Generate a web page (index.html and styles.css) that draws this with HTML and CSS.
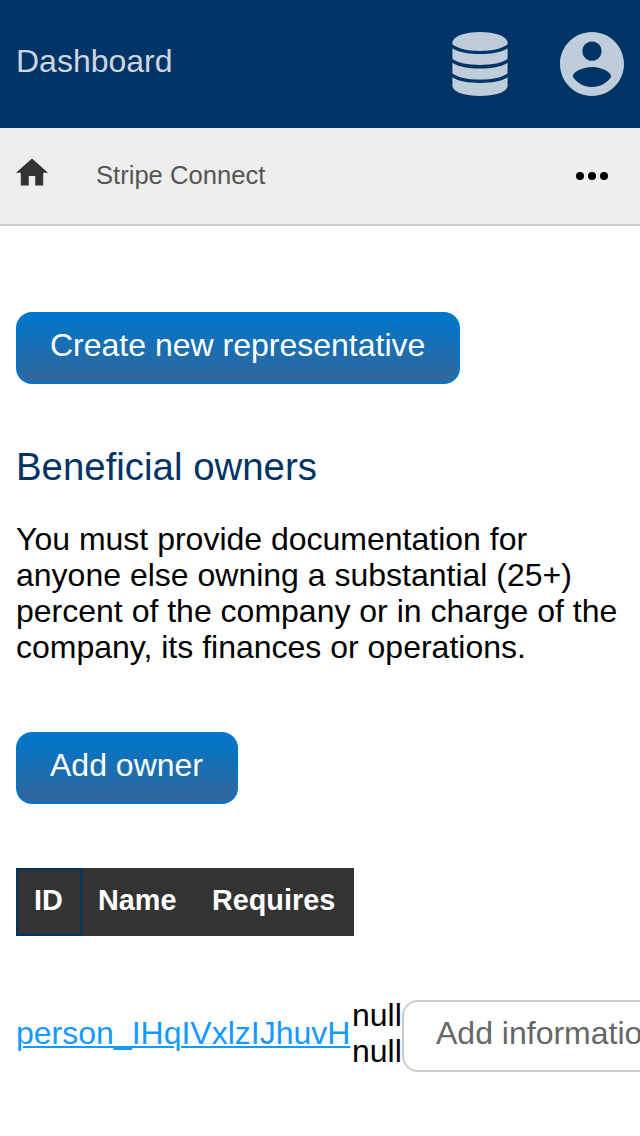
FILE: index.html
```html
<!DOCTYPE html>
<html lang="en">
<head>
<meta charset="utf-8">
<title>Dashboard</title>
<link rel="stylesheet" href="styles.css">
</head>
<body>
<header class="header">
  <a class="header-title">Dashboard</a>
  <svg class="icon-data" viewBox="0 0 56 64"><path d="M.4 10C1.500 4.200 13 0 28 0s26.500 4.200 27.600 10v2.300C50.500 16.600 40.500 19 28 19S5.500 16.600.4 12.300zM.4 16.200C5.500 20 16 22.100 28 22.100s22.500-2.100 27.600-5.900v10.600C50.500 31 40.500 33 28 33S5.500 31 .4 26.800zM.4 30.700C5.500 34.500 16 36.500 28 36.500s22.500-2 27.600-5.800v10.600C50.500 45.600 40.500 47.600 28 47.600S5.500 45.600.4 41.300zM.4 45.200C5.500 49 16 50.900 28 50.900s22.500-1.900 27.600-5.700v9.300C54 60.500 42.500 64 28 64S2 60.500.4 54.500z"/></svg>
  <svg class="icon-account" viewBox="2 2 20 20"><path d="M12 2C6.480 2 2 6.480 2 12s4.480 10 10 10 10-4.480 10-10S17.520 2 12 2zm0 3c1.660 0 3 1.340 3 3s-1.340 3-3 3-3-1.340-3-3 1.340-3 3-3zm0 14.200c-2.500 0-4.710-1.280-6-3.220.03-1.990 4-3.080 6-3.080 1.990 0 5.970 1.090 6 3.080-1.290 1.940-3.500 3.220-6 3.220z"/></svg>
</header>
<nav class="navbar">
  <svg class="icon-home" viewBox="2 2.750 20 20"><path d="M10 20v-6h4v6h5v-8h3L12 3 2 12h3v8z"/></svg>
  <a class="navbar-link">Stripe Connect</a>
  <svg class="icon-more" viewBox="0 0 32 8"><circle cx="4" cy="4" r="4"/><circle cx="16" cy="4" r="4"/><circle cx="28" cy="4" r="4"/></svg>
</nav>
<main class="content">
  <a class="button button-primary">Create new representative</a>
  <h2 class="heading">Beneficial owners</h2>
  <p class="description">You must provide documentation for anyone else owning a substantial (25+) percent of the company or in charge of the company, its finances or operations.</p>
  <a class="button button-primary">Add owner</a>
  <div class="columns">
    <span class="column column-active">ID</span>
    <span class="column">Name</span>
    <span class="column">Requires</span>
  </div>
  <div class="owner">
    <a class="owner-link">person_IHqIVxlzIJhuvH</a>
    <div class="owner-name">null<br>null</div>
    <a class="button button-plain">Add information</a>
  </div>
</main>
</body>
</html>
```

FILE: styles.css
```css
* {
  box-sizing: border-box;
}

body {
  margin: 0;
  overflow: hidden;
  background: #fff;
  color: #000;
  font: 32px/36px "Liberation Sans", Arial, sans-serif;
}

.header {
  display: flex;
  align-items: flex-start;
  height: 128px;
  padding: 32px 16px;
  background: #036;
}

.header-title {
  flex: 1;
  padding-top: 11px;
  color: #ccd6e0;
}

.icon-data {
  width: 56px;
  height: 64px;
  margin-right: 52px;
  fill: #bfccd9;
}

.icon-account {
  width: 64px;
  height: 64px;
  fill: #bfccd9;
}

.navbar {
  display: flex;
  align-items: center;
  height: 98px;
  padding: 0 32px 0 16px;
  border-bottom: 2px solid #ccc;
  background: #eee;
}

.icon-home {
  width: 32px;
  height: 32px;
  margin: 0 48px 4px 0;
  fill: #333;
}

.navbar-link {
  flex: 1;
  padding-bottom: 2px;
  color: #555;
  font-size: 25.600px;
}

.icon-more {
  width: 32px;
  height: 8px;
}

.content {
  padding: 86px 16px 0;
}

.button {
  display: block;
  flex: none;
  width: fit-content;
  height: 72px;
  padding: 13px 33px 0 32px;
  border: 2px solid #07c;
  border-radius: 16px;
  white-space: nowrap;
}

.button-primary {
  background: linear-gradient(#07c, #369);
  color: #fff;
}

.button-plain {
  border-color: #ccc;
  background: #fff;
  color: #666;
}

.heading {
  margin: 61px 0 32px;
  color: #036;
  font-size: 38.400px;
  font-weight: 400;
  line-height: 44px;
}

.description {
  margin: 0 0 67px;
}

.columns {
  display: flex;
  width: 338px;
  height: 68px;
  margin-top: 64px;
  background: #333;
  color: #fff;
  font-size: 28.800px;
  font-weight: 700;
}

.column {
  padding: 14px 18px 0 17.500px;
}

.column-active {
  width: 66px;
  padding: 12px 0 0 16px;
  border: 2px solid #036;
}

.column-active + .column {
  padding-left: 16px;
}

.owner {
  display: flex;
  align-items: center;
  margin-top: 58px;
}

.owner-link {
  flex: none;
  width: 336px;
  color: #1499ff;
  text-decoration: underline;
  text-decoration-thickness: 2px;
  text-underline-offset: 2px;
}

.owner-name {
  flex: none;
  width: 50px;
}

.owner .button {
  margin-top: 6px;
}
```
